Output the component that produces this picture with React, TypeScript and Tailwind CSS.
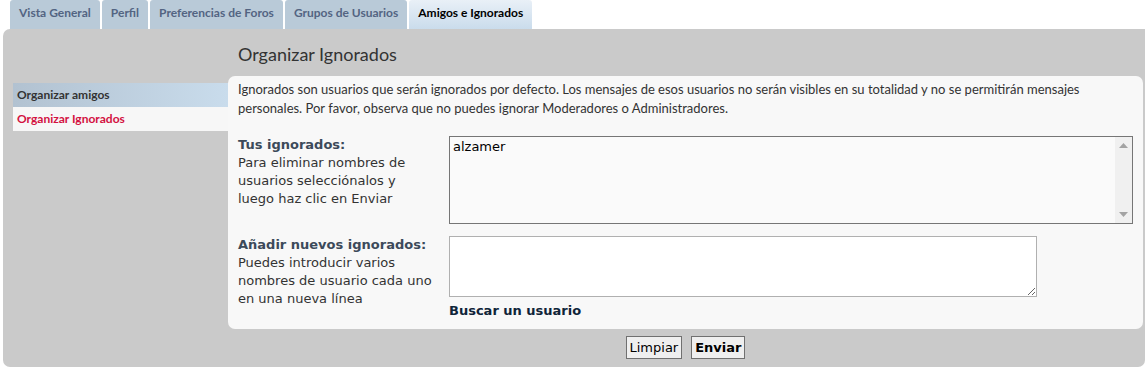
const tabs = [
  { label: "Vista General", active: false },
  { label: "Perfil", active: false },
  { label: "Preferencias de Foros", active: false },
  { label: "Grupos de Usuarios", active: false },
  { label: "Amigos e Ignorados", active: true },
];

function ScrollArrow({ up }: { up: boolean }) {
  return (
    <svg width="9" height="5" viewBox="0 0 9 5" className="block">
      <path d={up ? "M0 5 L4.5 0 L9 5 Z" : "M0 0 L4.5 5 L9 0 Z"} fill="#a3a3a3" />
    </svg>
  );
}

export default function App() {
  return (
    <div className="w-[1145px] h-[368px] overflow-hidden bg-white font-['Lato','Liberation_Sans',sans-serif] text-[#333]">
      {/* tabs */}
      <ul className="flex gap-[2px] pl-[10px] h-[29px]">
        {tabs.map((t) => (
          <li
            key={t.label}
            className={
              t.active
                ? "px-[9px] pt-[4px] text-[12px] leading-[18px] font-bold text-[#000] bg-gradient-to-b from-[#e9f0f7] to-[#cadcec] rounded-t-[3px]"
                : "px-[9px] pt-[4px] text-[12px] leading-[18px] font-bold text-[#536482] bg-[#b9cad8] rounded-t-[3px]"
            }
          >
            {t.label}
          </li>
        ))}
      </ul>

      {/* main panel */}
      <div className="ml-[3px] bg-[#cacaca] rounded-[7px] rounded-tr-none flex">
        <nav className="w-[215px] ml-[10px] mt-[54px] text-[12px] font-bold">
          <div className="h-[24px] pl-[4px] flex items-center bg-gradient-to-r from-[#b2c2d1] to-[#c9dcec] text-[#333]">
            Organizar amigos
          </div>
          <div className="h-[24px] pl-[4px] flex items-center bg-[#f7f7f7] text-[#d31141]">
            Organizar Ignorados
          </div>
        </nav>

        <main className="flex-1 mr-[2px]">
          <h2 className="pt-[14px] pl-[10px] text-[18px] leading-[22px] mb-[11px] text-[#333]">
            Organizar Ignorados
          </h2>

          <div className="bg-[#f8f8f8] rounded-[7px] pt-[4px] pb-[9px] px-[10px]">
            <p className="text-[13px] leading-[19px] text-[#333] mb-[18px]">
              Ignorados son usuarios que serán ignorados por defecto. Los mensajes de esos usuarios no serán visibles en su totalidad y no se permitirán mensajes personales. Por favor, observa que no puedes ignorar Moderadores o Administradores.
            </p>

            <div className="font-['DejaVu_Sans','Liberation_Sans',sans-serif] text-[13px] leading-[18px]">
              <dl className="flex">
                <dt className="w-[211px]">
                  <div className="font-bold text-[#3c4a5a]">Tus ignorados:</div>
                  <div className="text-[#333]">
                    Para eliminar nombres de
                    <br />
                    usuarios selecciónalos y
                    <br />
                    luego haz clic en Enviar
                  </div>
                </dt>
                <dd className="w-[684px] h-[88px] border border-[#767676] bg-[#fafafa] flex">
                  <div className="flex-1 pl-[3px] pt-[1px] text-[13px] text-black">alzamer</div>
                  <div className="w-[17px] bg-[#f0f0f0] flex flex-col items-center justify-between py-[6px]">
                    <ScrollArrow up />
                    <ScrollArrow up={false} />
                  </div>
                </dd>
              </dl>

              <dl className="flex mt-[12px]">
                <dt className="w-[211px]">
                  <div className="font-bold text-[#3c4a5a]">Añadir nuevos ignorados:</div>
                  <div className="text-[#333]">
                    Puedes introducir varios
                    <br />
                    nombres de usuario cada uno
                    <br />
                    en una nueva línea
                  </div>
                </dt>
                <dd>
                  <textarea className="block w-[588px] h-[61px] border border-[#b0b0b0] bg-white" />
                  <div className="mt-[5px] font-bold text-[#0f2438]">Buscar un usuario</div>
                </dd>
              </dl>
            </div>
          </div>

          <div className="flex justify-center gap-[9px] mt-[7px] mb-[8px] font-['DejaVu_Sans','Liberation_Sans',sans-serif] text-[13px]">
            <button className="h-[23px] px-[3px] border border-[#707070] bg-[#efefef] text-black">Limpiar</button>
            <button className="h-[23px] px-[3px] border border-[#707070] bg-[#efefef] text-black font-bold">Enviar</button>
          </div>
        </main>
      </div>
    </div>
  );
}
